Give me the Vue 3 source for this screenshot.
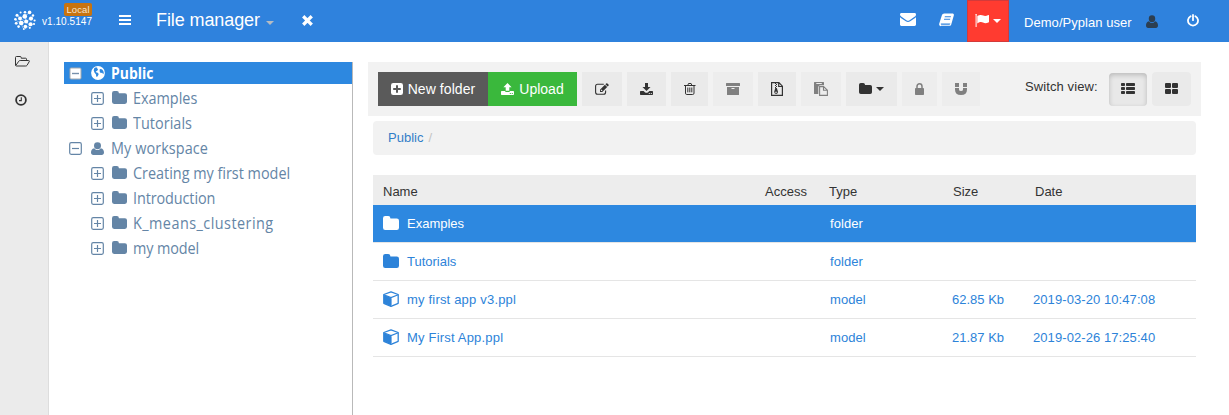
<script setup>
const tree = [
  { label: 'Public', icon: 'globe', open: true, selected: true, cls: 't-pu' },
  { label: 'Examples', icon: 'folder', child: true, cls: 't-ex' },
  { label: 'Tutorials', icon: 'folder', child: true, cls: 't-tu' },
  { label: 'My workspace', icon: 'user', open: true, cls: 't-ws' },
  { label: 'Creating my first model', icon: 'folder', child: true, cls: 't-cr' },
  { label: 'Introduction', icon: 'folder', child: true, cls: 't-in' },
  { label: 'K_means_clustering', icon: 'folder', child: true, cls: 't-km' },
  { label: 'my model', icon: 'folder', child: true, cls: 't-mm' },
]
const tools = [
  { icon: 'edit', cls: 'w40' },
  { icon: 'download', cls: 'w39' },
  { icon: 'trash', cls: 'w37' },
  { icon: 'archive', cls: 'w40 off' },
  { icon: 'zip', cls: 'w38' },
  { icon: 'paste', cls: 'w40 off' },
  { icon: 'folder', cls: 'w51', caret: true },
  { icon: 'lock', cls: 'w35 off' },
  { icon: 'magnet', cls: 'w38 off' },
]
const files = [
  { name: 'Examples', icon: 'folder', type: 'folder', selected: true },
  { name: 'Tutorials', icon: 'folder', type: 'folder' },
  { name: 'my first app v3.ppl', icon: 'cube', type: 'model', size: '62.85 Kb', date: '2019-03-20 10:47:08' },
  { name: 'My First App.ppl', icon: 'cube', type: 'model', size: '21.87 Kb', date: '2019-02-26 17:25:40' },
]
</script>

<template>
  <svg class="defs" aria-hidden="true">
    <symbol id="logo" viewBox="0 0 22 20">
      <g stroke="currentColor" stroke-width=".7" opacity=".6">
        <path d="M3 5L6 8L11 6L15 3M6 8L7 13L12 12L17 8M1 10L7 13L9 18M12 12L16 15L11 19M6 8L12 12L11 6" fill="none" />
      </g>
      <g fill="currentColor">
        <circle cx="11" cy="2.2" r="1.3" /><circle cx="15.6" cy="2.4" r="1.8" /><circle cx="6.6" cy="2.6" r="1" />
        <circle cx="3" cy="5.2" r="1.5" /><circle cx="10.8" cy="6.4" r="2.3" /><circle cx="19" cy="5.5" r="1.2" />
        <circle cx="6" cy="8.4" r="1.9" /><circle cx="17" cy="8.6" r="2.1" /><circle cx="1.4" cy="9.3" r="1.3" />
        <circle cx="12.2" cy="11.4" r="2" /><circle cx="20.6" cy="10.5" r="1.1" /><circle cx="7.2" cy="13" r="2.3" />
        <circle cx="2.2" cy="13.3" r="1.4" /><circle cx="16.6" cy="14.2" r="2" /><circle cx="20" cy="14" r="1.1" />
        <circle cx="4.6" cy="16.6" r="1.3" /><circle cx="11.4" cy="16.6" r="1.8" /><circle cx="9.8" cy="19" r="1" /><circle cx="15.8" cy="17.8" r="1.1" />
      </g>
    </symbol>
    <symbol id="bars" viewBox="0 0 12 10"><path d="M0 0h12v2H0zM0 4h12v2H0zM0 8h12v2H0z" fill="currentColor" /></symbol>
    <symbol id="times" viewBox="0 0 11 11"><path d="M2.4 2.4L8.6 8.6M8.6 2.4L2.4 8.6" stroke="currentColor" stroke-width="3.3" stroke-linecap="square" /></symbol>
    <symbol id="caret" viewBox="0 0 8 4"><path d="M0 0h8L4 4z" fill="currentColor" /></symbol>
    <symbol id="mail" viewBox="0 0 16 13">
      <path fill="currentColor" d="M1.4 0h13.2C15.4 0 16 .6 16 1.4c0 1-.7 1.9-1.5 2.4L9.6 7.200Q8 8.300 6.400 7.200L1.500 3.800C.7 3.300 0 2.300 0 1.500 0 .6.600 0 1.400 0zM0 4.200q.4.400.9.700l4.900 3.400Q8 9.900 10.200 8.300l4.900-3.400q.5-.3.9-.7v7.400c0 .8-.6 1.400-1.400 1.400H1.400C.6 13 0 12.400 0 11.600z" />
    </symbol>
    <symbol id="book" viewBox="0 0 15 14">
      <path fill="currentColor" fill-rule="evenodd" d="M5.300.5h8.100c1.100 0 1.800.9 1.400 2l-2.500 8.800c-.3 1.100-.9 1.500-1.900 1.500H2.700c-.9 0-1.100.2-1.100.5 0 0-1.900-.8-1.400-2.600L2.800 2.500C3.200 1.200 4 .5 5.300.5zM5.900 3.200l-.3 1h6.100l.3-1zM5.200 5.700l-.3 1H11l.3-1zM2 10.500c-.4.500-.3 1.200.5 1.200h7.700c.5 0 .8-.2 1-.7l.1-.5z" />
    </symbol>
    <symbol id="flag" viewBox="0 0 14 13">
      <path fill="currentColor" d="M.3.3a1 1 0 0 1 1.600 0l-.3 1V13H.6V1.300zM2.300 2C5 .5 6.500.7 8.200 1.500c1.700.8 3 .5 5.200-.5.4-.2.6 0 .6.400v6.300c0 .4-.2.600-.6.800-2 1-3.700 1-5.400.1C6.300 7.700 4.800 7.900 2.300 9.400z" />
    </symbol>
    <symbol id="user" viewBox="0 0 13 14" preserveAspectRatio="none">
      <path fill="currentColor" d="M6.500.3a3.500 3.700 0 1 1 0 7.400 3.500 3.700 0 0 1 0-7.400zM3.200 6.700C4.200 8.100 5.300 8.700 6.500 8.700s2.300-.6 3.300-2C12 6.900 13 9 13 11.300 13 13 12.100 14 10.700 14H2.300C.9 14 0 13 0 11.300 0 9 1 6.900 3.200 6.700z" />
    </symbol>
    <symbol id="power" viewBox="0 0 12 13">
      <path d="M3.600 2.200A5 5 0 1 0 8.400 2.200M6 1v5.200" fill="none" stroke="currentColor" stroke-width="1.800" stroke-linecap="round" />
    </symbol>
    <symbol id="folder-open" viewBox="0 0 15 11">
      <path d="M11.500 4.500V3.200Q11.500 2.200 10.500 2.200H6.200V1.500Q6.200.5 5.200.5H1.500Q.5.500.5 1.500v7.500Q.5 10 1.500 10h9.200q.8 0 1.300-.6l2.200-3.700q.5-1.200-.7-1.200H5.200q-.9 0-1.400.7L.9 9.300" fill="none" stroke="currentColor" stroke-linejoin="round" />
    </symbol>
    <symbol id="clock" viewBox="0 0 12 12"><circle cx="6" cy="6" r="4.900" fill="none" stroke="currentColor" stroke-width="1.800" /><path d="M6.300 3.200v3.400H4" fill="none" stroke="currentColor" stroke-width="1.100" /></symbol>
    <symbol id="globe" viewBox="0 0 14 14">
      <circle cx="7" cy="7" r="6.900" fill="currentColor" />
      <path fill="#2d88e0" d="M3.200 2.200L5 1.300l1.600.6-.5.900 1 .4-.9 1.500-1.400.7.3.9 1.600.4 1 1.300-.5 1.200-1 1.500-.9.100-.4-2.600-1.300-1.400-.9-2.200zM8.600 3.600l1-.5 1.500.3 1.200 1.500.5 2-.6 1.300-1-1.400-1.400.1-1-1z" />
    </symbol>
    <symbol id="folder" viewBox="0 0 13 11" preserveAspectRatio="none">
      <path fill="currentColor" d="M13 3.700v5.500A1.800 1.800 0 0 1 11.200 11H1.800A1.800 1.800 0 0 1 0 9.200V1.800A1.800 1.800 0 0 1 1.800 0h2.400A1.800 1.800 0 0 1 6 1.800v.1h5.200A1.800 1.800 0 0 1 13 3.700z" />
    </symbol>
    <symbol id="plus" viewBox="0 0 13 13"><rect x=".7" y=".7" width="11.600" height="11.600" rx="1.500" fill="none" stroke="currentColor" stroke-width="1.200" /><path d="M3 6.500h7M6.500 3v7" stroke="currentColor" stroke-width="1.200" /></symbol>
    <symbol id="minus" viewBox="0 0 13 13"><rect x=".7" y=".7" width="11.600" height="11.600" rx="1.500" fill="none" stroke="currentColor" stroke-width="1.200" /><path d="M3 6.500h7" stroke="currentColor" stroke-width="1.200" /></symbol>
    <symbol id="minus-on" viewBox="0 0 13 13"><rect x="1" y="1" width="11" height="11" rx="1" fill="#fff" stroke="#a5a9ae" stroke-width="1" /><path d="M3 6.500h7" stroke="#7790ab" stroke-width="1.400" /></symbol>
    <symbol id="plus-square" viewBox="0 0 12 12"><path fill="currentColor" fill-rule="evenodd" d="M2.200 0h7.600Q12 0 12 2.200v7.600Q12 12 9.800 12H2.200Q0 12 0 9.800V2.200Q0 0 2.200 0zM5 2.200V5H2.200v2H5v2.800h2V7h2.800V5H7V2.200z" /></symbol>
    <symbol id="upload" viewBox="0 0 13 12">
      <path fill="currentColor" fill-rule="evenodd" d="M6.500 0l4.100 4.200H8.300v3.600H4.700V4.200H2.400zM.7 8h3.200q.4.900 1.300.9h2.600q.9 0 1.300-.9h3.200q.7 0 .7.700v2.600q0 .7-.7.700H.7q-.7 0-.7-.7V8.700Q0 8 .7 8zm8.100 2v1h1v-1zm2 0v1h1v-1z" />
    </symbol>
    <symbol id="download" viewBox="0 0 13 12">
      <path fill="currentColor" fill-rule="evenodd" d="M5 0h3v4h2.500l-4 4-4-4H5zM.7 8h2.900l1.300 1.200q1.600 1.200 3.200 0L9.400 8h2.900q.7 0 .7.700v2.600q0 .7-.7.700H.7q-.7 0-.7-.7V8.700Q0 8 .7 8zm8.100 2v1h1v-1zm2 0v1h1v-1z" />
    </symbol>
    <symbol id="edit" viewBox="0 0 14 12">
      <path d="M8.800 1.300H2.600Q.6 1.300.6 3.300v6q0 2 2 2h6q2 0 2-2V7.600" fill="none" stroke="currentColor" stroke-width="1.100" />
      <path fill="currentColor" fill-rule="evenodd" d="M11.200.5q.6-.5 1.200 0l1.100 1.100q.5.600 0 1.200l-.8.800-2.300-2.300zM9.900 1.800l2.300 2.300-4.900 4.900H5V6.700zM5.900 7.100v1h1l.6-.6-1-1z" />
    </symbol>
    <symbol id="trash" viewBox="0 0 12 12">
      <path d="M1.500 2.500v7.600q0 1.400 1.200 1.400h6q1.300 0 1.300-1.400V2.500M0 2.500h11.500M3.800 2.300l.7-1.800h2.600l.7 1.800M3.800 4.500v4.800M5.800 4.500v4.800M7.800 4.500v4.800" fill="none" stroke="currentColor" />
    </symbol>
    <symbol id="archive" viewBox="0 0 14 12"><path fill="currentColor" fill-rule="evenodd" d="M.5 0h13q.5 0 .5.500V3H0V.500Q0 0 .5 0zM1 4h12v7.500q0 .5-.5.500h-11q-.5 0-.5-.5zM5.500 5v1h3V5z" /></symbol>
    <symbol id="zip" viewBox="0 0 12 14">
      <path d="M.6.600h7.300l3.500 3.600v9.200H.600zM7.700.800v3.700h3.500" fill="none" stroke="currentColor" stroke-width="1.200" />
      <path fill="currentColor" fill-rule="evenodd" d="M4 1h1v1H4zM5 2h1v1H5zM4 3h1v1H4zM5 4h1v1H5zM4 5h1v1H4zM4.300 6h1.500l1.200 3.800q.2 2-1.900 2.200Q3 11.800 3.200 9.800zM4.200 9.700v1h1.700v-1z" />
    </symbol>
    <symbol id="paste" viewBox="0 0 14 14">
      <path fill="currentColor" fill-rule="evenodd" d="M.6 0h8.800q.6 0 .6.600V3.200H6.500Q4.300 3.200 4.300 5v7H.6q-.6 0-.6-.6V.6Q0 0 .6 0zM2.300 1v1h5.500V1z" />
      <path d="M5.600 4.600h4l3.800 3.600v5.200H5.600zM9.500 4.700v3.600h3.800" fill="none" stroke="currentColor" stroke-width="1.100" />
    </symbol>
    <symbol id="lock" viewBox="0 0 9 12"><path d="M2 6V3.500a2.500 2.700 0 0 1 5 0V6" fill="none" stroke="currentColor" stroke-width="1.500" /><rect y="5" width="9" height="7" rx=".8" fill="currentColor" /></symbol>
    <symbol id="magnet" viewBox="0 0 12 12"><path fill="currentColor" d="M0 0h4v4H0zM8 0h4v4H8zM0 5h4v1.500q0 1.500 2 1.500t2-1.500V5h4v1.500Q12 12 6 12T0 6.500z" /></symbol>
    <symbol id="list" viewBox="0 0 14 11">
      <g fill="currentColor"><rect width="4" height="3" rx=".8" /><rect x="5" width="9" height="3" rx=".8" /><rect y="4" width="4" height="3" rx=".8" /><rect x="5" y="4" width="9" height="3" rx=".8" /><rect y="8" width="4" height="3" rx=".8" /><rect x="5" y="8" width="9" height="3" rx=".8" /></g>
    </symbol>
    <symbol id="grid" viewBox="0 0 13 11">
      <g fill="currentColor"><rect width="6" height="5" rx="1" /><rect x="7" width="6" height="5" rx="1" /><rect y="6" width="6" height="5" rx="1" /><rect x="7" y="6" width="6" height="5" rx="1" /></g>
    </symbol>
    <symbol id="cube" viewBox="0 0 16 16">
      <path d="M8 .8L15.200 3.500v8.800L8 15.300.8 12.300V3.500z" fill="none" stroke="currentColor" stroke-width="1.300" stroke-linejoin="round" />
      <path d="M.8 3.700L8 6.500l7.200-2.800M8 6.500v8" fill="none" stroke="currentColor" stroke-width="1.200" />
      <path d="M.8 3.900L8 6.700v8.500L.8 12.300z" fill="currentColor" />
    </symbol>
  </svg>

  <div class="app">
    <header class="topbar">
      <svg class="logo"><use href="#logo" /></svg>
      <div class="version"><span class="env">Local</span><span class="num">v1.10.5147</span></div>
      <svg class="i-bars"><use href="#bars" /></svg>
      <h1 class="title">File manager</h1>
      <svg class="i-caret title-caret"><use href="#caret" /></svg>
      <svg class="i-times"><use href="#times" /></svg>
      <nav class="right">
        <svg class="i-mail"><use href="#mail" /></svg>
        <svg class="i-book"><use href="#book" /></svg>
        <button class="flag"><svg class="i-flag"><use href="#flag" /></svg><svg class="i-caret"><use href="#caret" /></svg></button>
        <span class="who">Demo/Pyplan user</span>
        <svg class="i-who"><use href="#user" /></svg>
        <svg class="i-power"><use href="#power" /></svg>
      </nav>
    </header>

    <div class="body">
      <aside class="rail">
        <svg class="i-open"><use href="#folder-open" /></svg>
        <svg class="i-clock"><use href="#clock" /></svg>
      </aside>

      <section class="tree">
        <div v-for="n in tree" :key="n.label" class="node" :class="{ child: n.child, selected: n.selected }">
          <svg class="i-box"><use :href="n.selected ? '#minus-on' : n.open ? '#minus' : '#plus'" /></svg>
          <svg :class="'n-' + n.icon"><use :href="'#' + n.icon" /></svg>
          <span :class="n.cls">{{ n.label }}</span>
        </div>
      </section>

      <main class="content">
        <div class="toolbar">
          <button class="btn new"><svg class="i-plus-square"><use href="#plus-square" /></svg><span>New folder</span></button>
          <button class="btn upload"><svg class="i-upload"><use href="#upload" /></svg><span>Upload</span></button>
          <button v-for="t in tools" :key="t.icon" class="btn tool" :class="t.cls">
            <svg :class="'i-' + t.icon"><use :href="'#' + t.icon" /></svg>
            <svg v-if="t.caret" class="i-caret"><use href="#caret" /></svg>
          </button>
          <span class="switch">Switch view:</span>
          <button class="btn view active"><svg class="i-list"><use href="#list" /></svg></button>
          <button class="btn view"><svg class="i-grid"><use href="#grid" /></svg></button>
        </div>

        <div class="crumbs"><a>Public</a><span>/</span></div>

        <div class="table">
          <div class="row head"><span>Name</span><span>Access</span><span>Type</span><span>Size</span><span>Date</span></div>
          <div v-for="f in files" :key="f.name" class="row" :class="{ selected: f.selected }">
            <span class="name" :class="f.type"><svg :class="'f-' + f.icon"><use :href="'#' + f.icon" /></svg>{{ f.name }}</span>
            <span></span><span class="type">{{ f.type }}</span><span class="size">{{ f.size }}</span><span class="date">{{ f.date }}</span>
          </div>
        </div>
      </main>
    </div>
  </div>
</template>

<style>
body { background: #fff; overflow: hidden; }
</style>

<style scoped>
* { box-sizing: border-box; }
svg { display: block; flex: none; }
.defs { position: absolute; width: 0; height: 0; }
button { border: 0; padding: 0; margin: 0; font: inherit; color: inherit; }
.app { width: 1229px; height: 415px; display: flex; flex-direction: column; font: 13px/18px "Liberation Sans", Arial, sans-serif; color: #333; white-space: nowrap; }

.topbar { height: 42px; flex: none; display: flex; align-items: flex-start; background: #2f82dd; color: #fff; }
.logo { width: 22px; height: 20px; margin: 10px 0 0 14px; }
.version { width: 50px; margin: 3px 0 0 6px; height: 30px; display: flex; flex-direction: column; align-items: flex-end; }
.env { height: 13px; width: 28px; text-align: center; background: #c8730f; border-radius: 2px; font-size: 9.500px; line-height: 13px; color: #f5e6d0; letter-spacing: .1px; }
.num { font-size: 10px; line-height: 12px; letter-spacing: .05px; }
.i-bars { width: 12px; height: 10px; margin: 15px 0 0 27px; }
.title { width: 104px; margin: 8px 0 0 25px; font-size: 18px; line-height: 24px; font-weight: 400; letter-spacing: -.1px; }
.i-caret { width: 8px; height: 4px; }
.title-caret { margin: 21px 0 0 6px; color: #b6bcc3; }
.i-times { width: 11px; height: 11px; margin: 15px 0 0 28px; }
.right { margin-left: auto; display: flex; align-items: flex-start; padding-right: 30px; }
.i-mail { width: 16px; height: 13px; margin-top: 13px; }
.i-book { width: 15px; height: 14px; margin: 13px 13px 0 23px; }
.flag { width: 42px; height: 42px; background: #ff3b30; border: 1px solid #d33a3a; display: flex; align-items: flex-start; justify-content: center; gap: 4px; color: #fff; }
.i-flag { width: 14px; height: 13px; margin-top: 13px; }
.flag .i-caret { margin-top: 18px; }
.who { width: 108px; margin: 14px 0 0 15px; letter-spacing: .05px; }
.i-who { width: 12px; height: 13px; margin: 15px 0 0 14px; color: #2c3e50; }
.i-power { width: 12px; height: 13px; margin: 14px 0 0 29px; }

.body { flex: 1; display: flex; }
.rail { width: 49px; background: #ebebeb; border-right: 1px solid #ddd; color: #333; }
.i-open { width: 15px; height: 11px; margin: 14px 0 0 15px; }
.i-clock { width: 12px; height: 12px; margin: 27px 0 0 15px; }

.tree { width: 289px; margin: 20px 0 0 15px; border-right: 1px solid #b9b9b9; color: #6485a6; font: 16px/22px "Open Sans", "Noto Sans", sans-serif; }
.node { height: 22px; margin-bottom: 3px; padding-left: 5px; display: flex; align-items: center; }
.node.child { padding-left: 27px; }
.node.selected { background: #2d88e0; color: #fff; font-weight: 700; }
.node span { transform-origin: left; transform: scaleX(.9); }
.node .t-pu { transform: scaleX(.87); }
.node .t-ws { letter-spacing: .1px; }
.node .t-tu { letter-spacing: .05px; }
.node .t-in { letter-spacing: -.1px; }
.node .t-km { letter-spacing: .52px; }
.node .t-mm { letter-spacing: -.1px; }
.i-box { width: 13px; height: 13px; margin-right: 9px; }
.n-globe { width: 14px; height: 14px; margin-right: 6px; }
.n-user { width: 13px; height: 13px; margin-right: 7px; }
.n-folder { width: 15px; height: 13px; margin: 0 6px 1px -1px; }

.content { margin: 20px 0 0 15px; width: 833px; }
.toolbar { height: 54px; background: #f2f2f2; padding: 10px 10px 0; display: flex; }
.btn { height: 34px; display: flex; align-items: center; justify-content: center; }
.new { width: 110px; background: #5a5a5a; color: #fff; font-size: 14px; gap: 5px; }
.new span { letter-spacing: .07px; }
.upload { width: 89px; background: #3ab83c; color: #fff; font-size: 14px; gap: 5px; }
.i-plus-square { width: 12px; height: 12px; }
.i-upload { width: 13px; height: 12px; }
.tool { background: #eaeaea; margin-left: 5px; color: #333; gap: 4px; }
.tool.off { background: #ededed; color: #808080; }
.w35 { width: 35px; } .w37 { width: 37px; } .w38 { width: 38px; } .w39 { width: 39px; } .w40 { width: 40px; } .w51 { width: 51px; }
.i-edit { width: 14px; height: 12px; }
.i-download { width: 13px; height: 12px; }
.i-trash { width: 12px; height: 12px; }
.i-archive { width: 14px; height: 12px; }
.i-zip { width: 12px; height: 14px; }
.i-paste { width: 14px; height: 14px; }
.i-folder { width: 13px; height: 11px; margin-bottom: 1px; }
.i-lock { width: 9px; height: 12px; margin-bottom: 1px; }
.i-magnet { width: 12px; height: 12px; margin-bottom: 1px; }
.switch { margin: 6px 0 0 auto; width: 84px; letter-spacing: .1px; }
.view { width: 39px; background: #eaeaea; border-radius: 4px; margin-left: 5px; }
.view.active { width: 38px; margin-left: 0; margin-top: 1px; height: 33px; background: #e8e8e8; box-shadow: inset 0 2px 5px rgba(0, 0, 0, .2); }
.i-list { width: 14px; height: 11px; margin-bottom: 2px; }
.i-grid { width: 13px; height: 11px; margin-bottom: 1px; }

.crumbs { margin: 5px 5px 0; height: 34px; padding: 8px 15px; border-radius: 4px; background: #f2f2f2; color: #337ec8; }
.crumbs span { color: #c4c4c4; margin-left: 5px; }

.table { margin: 20px 5px 0; }
.row { display: grid; grid-template-columns: 382px 64px 124px 82px 1fr; align-items: center; height: 38px; padding-left: 10px; border-bottom: 1px solid #e5e5e5; color: #2d83d9; }
.row.head { height: 30px; padding-top: 3px; background: #ededed; border: 0; color: #333; }
.row.selected { background: #2d88e0; color: #fff; background-clip: padding-box; }
.name { display: flex; align-items: center; }
.name.model { letter-spacing: .19px; }
.f-folder { width: 16px; height: 14px; margin: -2px 8px 0 0; }
.f-cube { width: 16px; height: 16px; margin: -1px 8px 0 0; }
.type { padding-left: 1px; letter-spacing: .05px; }
.size { margin-left: -1px; }
.date { margin-left: -2px; letter-spacing: .08px; }
</style>
